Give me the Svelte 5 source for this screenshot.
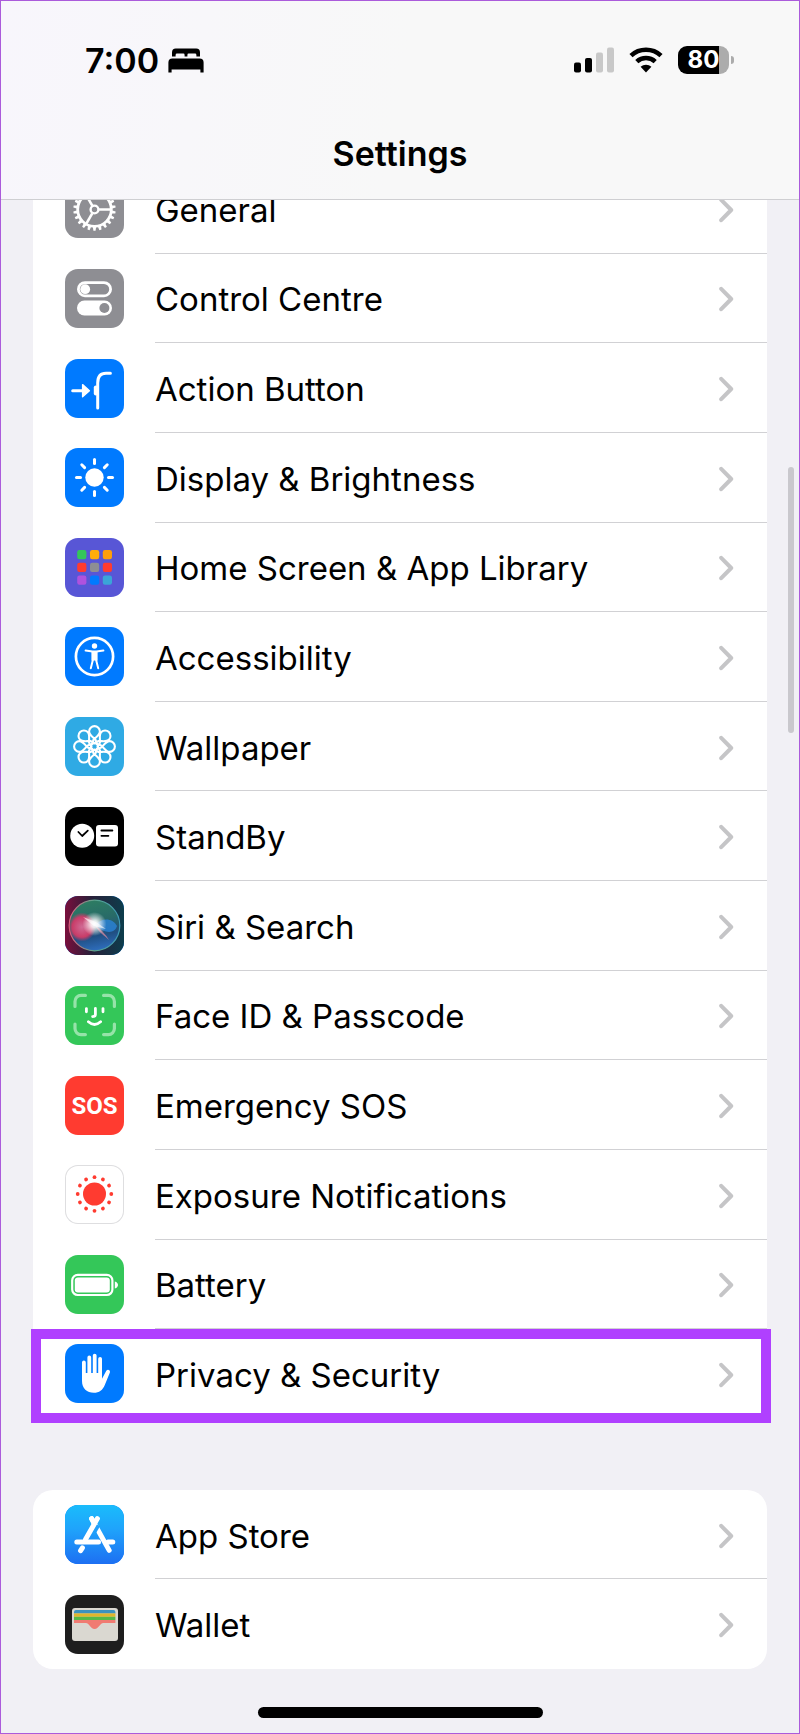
<script lang="ts">
  interface Item {
    id: string;
    label: string;
    highlighted?: boolean;
  }

  const groups: Item[][] = [
    [
      { id: "general", label: "General" },
      { id: "control", label: "Control Centre" },
      { id: "action", label: "Action Button" },
      { id: "display", label: "Display & Brightness" },
      { id: "home", label: "Home Screen & App Library" },
      { id: "accessibility", label: "Accessibility" },
      { id: "wallpaper", label: "Wallpaper" },
      { id: "standby", label: "StandBy" },
      { id: "siri", label: "Siri & Search" },
      { id: "faceid", label: "Face ID & Passcode" },
      { id: "sos", label: "Emergency SOS" },
      { id: "exposure", label: "Exposure Notifications" },
      { id: "battery", label: "Battery" },
      { id: "privacy", label: "Privacy & Security", highlighted: true },
    ],
    [
      { id: "appstore", label: "App Store" },
      { id: "wallet", label: "Wallet" },
    ],
  ];

  const homeTiles = [
    "#34c759", "#ffad0a", "#ff9f0a",
    "#ff3b30", "#8e8e93", "#ff3b30",
    "#af52de", "#007aff", "#3aa5d8",
  ];

  // evenly spaced angles around a circle
  const angles = (n: number) => Array.from({ length: n }, (_, i) => (i * 360) / n);
</script>

{#snippet icon(id: string)}
  <svg class="icon icon-{id}" viewBox="0 0 59 59" aria-hidden="true">
    {#if id === "general"}
      <g transform="translate(29.5 30.5)" fill="none" stroke="#fff">
        <circle r="16.8" stroke-width="2.8" />
        <circle r="3.9" stroke-width="2.4" />
        {#each angles(22) as a}
          <path d="M-1.7 -17 L-1.1 -21.2 H1.1 L1.7 -17 Z" fill="#fff" stroke="none" transform="rotate({a})" />
        {/each}
        {#each angles(3) as a}
          <path d="M4.5 0 H16" stroke-width="2.6" transform="rotate({a})" />
        {/each}
      </g>
    {:else if id === "control"}
      <rect x="13.4" y="13.6" width="32.2" height="13.2" rx="6.6" fill="none" stroke="#fff" stroke-width="2.8" />
      <circle cx="20.2" cy="20.2" r="4.9" fill="#fff" />
      <rect x="12" y="31.6" width="35" height="14.8" rx="7.4" fill="#fff" />
      <circle cx="39.4" cy="39" r="5" fill="#8e8e93" />
    {:else if id === "action"}
      <g fill="none" stroke="#fff" stroke-width="3" stroke-linecap="round">
        <path d="M7.7 31.7 H18" />
        <path d="M32.7 49 V24 C32.7 17.5 35 14.3 41 14.3 H45.4" />
      </g>
      <path d="M17.6 25.6 L24.4 31.7 L17.6 37.8 Z" fill="#fff" stroke="#fff" stroke-width="1.4" stroke-linejoin="round" />
      <rect x="28.8" y="26.6" width="4" height="10" rx="2" fill="#fff" />
    {:else if id === "display"}
      <g transform="translate(29.5 29.5)">
        <circle r="9.2" fill="#fff" />
        {#each angles(8) as a}
          <path d="M0 -14 V-18" stroke="#fff" stroke-width="3" stroke-linecap="round" transform="rotate({a})" />
        {/each}
      </g>
    {:else if id === "home"}
      {#each homeTiles as color, i}
        <rect
          x={12.2 + (i % 3) * 12.8}
          y={12 + Math.floor(i / 3) * 12.8}
          width="9.2"
          height="9.2"
          rx="2.2"
          fill={color}
        />
      {/each}
    {:else if id === "accessibility"}
      <circle cx="29.5" cy="29.5" r="18.6" fill="none" stroke="#fff" stroke-width="2.7" />
      <circle cx="29.5" cy="19" r="2.7" fill="#fff" />
      <path
        d="M20.6 23.6 L27.5 24.6 H31.5 L38.4 23.6 M25.8 41.2 L28 32.5 L29.5 31 L31 32.5 L33.2 41.2"
        fill="none"
        stroke="#fff"
        stroke-width="2"
        stroke-linecap="round"
        stroke-linejoin="round"
      />
      <path d="M26.4 24 H32.6 V33.5 H26.4 Z" fill="#fff" />
    {:else if id === "wallpaper"}
      <g transform="translate(29.5 29.5)" fill="none" stroke="#fff" stroke-width="2.1" stroke-linejoin="round">
        {#each angles(8) as a}
          <path d="M-2.4 -1.6 L-1.2 -6.4 C0.6 -9 5.4 -11.2 5.4 -15 A5.4 5.4 0 0 0 -5.4 -15 C-5.4 -11.2 -0.6 -9 1.2 -6.4 L2.4 -1.6" transform="rotate({a})" />
        {/each}
        <circle r="3.6" />
      </g>
    {:else if id === "standby"}
      <circle cx="17.2" cy="28.8" r="12" fill="#fff" />
      <rect x="31" y="18" width="22" height="21.4" rx="3" fill="#fff" />
      <path
        d="M13.4 25 L17.2 29 L22.8 23.6 M36.4 23.5 H47.4 M36.4 28.8 H43.4"
        fill="none"
        stroke="#000"
        stroke-width="1.8"
        stroke-linecap="round"
        stroke-linejoin="round"
      />
    {:else if id === "siri"}
      <defs>
        <linearGradient id="siri-bg">
          <stop offset="0" stop-color="#7a0f3c" />
          <stop offset="0.45" stop-color="#28203a" />
          <stop offset="1" stop-color="#0d3d4c" />
        </linearGradient>
        <linearGradient id="siri-orb" x1="0.4" y1="0" x2="0.6" y2="1">
          <stop offset="0" stop-color="#2d7d62" />
          <stop offset="0.4" stop-color="#286a68" />
          <stop offset="0.7" stop-color="#204f82" />
          <stop offset="1" stop-color="#2f6fc0" />
        </linearGradient>
        <linearGradient id="siri-rim">
          <stop offset="0" stop-color="#e0607f" />
          <stop offset="0.5" stop-color="#5aa58c" />
          <stop offset="1" stop-color="#3d9ab8" />
        </linearGradient>
        <radialGradient id="siri-glow">
          <stop offset="0" stop-color="#fff" />
          <stop offset="0.3" stop-color="#fff" stop-opacity="0.85" />
          <stop offset="1" stop-color="#fff" stop-opacity="0" />
        </radialGradient>
        <radialGradient id="siri-red">
          <stop offset="0" stop-color="#cf6a94" />
          <stop offset="0.7" stop-color="#c83c68" />
          <stop offset="1" stop-color="#c83c68" stop-opacity="0" />
        </radialGradient>
      </defs>
      <rect width="59" height="59" fill="url(#siri-bg)" />
      <circle cx="29.5" cy="29.5" r="25.3" fill="url(#siri-orb)" stroke="url(#siri-rim)" stroke-width="1.2" />
      <ellipse cx="17" cy="31" rx="14" ry="14.5" fill="url(#siri-red)" />
      <path d="M30 29 C36 22 47 21 52 30 C50 37 41 39 30 29 Z" fill="#2b83d8" fill-opacity="0.8" />
      <path d="M30 29 C36 33 41 39 44 44 C39 39 33 36 30 29 Z" fill="#e08aa0" fill-opacity="0.7" />
      <circle cx="29.5" cy="28" r="12" fill="url(#siri-glow)" />
      <path d="M18 21 L31 26 L41 33 L29 30 Z" fill="#fff" fill-opacity="0.6" />
    {:else if id === "faceid"}
      <path
        d="M10 20.4 V15.4 A6 6 0 0 1 16 9.4 H20.4 M38.6 9.4 H43.4 A6 6 0 0 1 49.4 15.4 V20.4 M49.4 38 V42.6 A6 6 0 0 1 43.4 48.6 H38.6 M20.4 48.6 H16 A6 6 0 0 1 10 42.6 V38"
        fill="none"
        stroke="#96e3a9"
        stroke-width="3.2"
        stroke-linecap="round"
      />
      <path
        d="M21.4 22.6 V25.8 M38 22.6 V25.8 M30.4 22.4 V28.4 Q30.4 30.6 27.6 30.6 M23.4 35.8 Q29.5 41.2 35.6 35.8"
        fill="none"
        stroke="#fff"
        stroke-width="2.8"
        stroke-linecap="round"
      />
    {:else if id === "sos"}
      <text x="29.5" y="38" text-anchor="middle">SOS</text>
    {:else if id === "exposure"}
      <g transform="translate(29.5 29)" fill="#ff3b30">
        <circle r="11.5" />
        {#each angles(12) as a}
          <circle cy="-16.8" r="1.9" transform="rotate({a})" />
        {/each}
      </g>
    {:else if id === "battery"}
      <rect x="7.2" y="19.8" width="40.2" height="20.2" rx="5.6" fill="none" stroke="#fff" stroke-width="2.2" />
      <rect x="9.8" y="22.4" width="35" height="15" rx="3.2" fill="#fff" />
      <path d="M49.8 26.4 C52 27 53 28.4 53 29.9 C53 31.4 52 32.8 49.8 33.4 Z" fill="#fff" />
    {:else if id === "privacy"}
      <path
        d="M18.9 18.4 V32 M24.3 13.4 V30 M29.7 11.6 V30 M35.1 14.8 V32"
        stroke="#fff"
        stroke-width="3.8"
        stroke-linecap="round"
      />
      <path
        d="M17 29 V37 C17 44.5 22 48.8 28.8 48.8 C34.2 48.8 37.8 46 39.8 41 L44.9 28.4 C45.6 26.2 42.6 24.6 41.3 26.8 L37 34.8 V29 Z"
        fill="#fff"
      />
    {:else if id === "appstore"}
      <defs>
        <linearGradient id="store-bg" x2="0" y2="1">
          <stop offset="0" stop-color="#1abcfb" />
          <stop offset="0.4" stop-color="#1fa4fb" />
          <stop offset="1" stop-color="#1d6ff2" />
        </linearGradient>
      </defs>
      <rect width="59" height="59" fill="url(#store-bg)" />
      <g fill="none" stroke="#fff" stroke-width="5" stroke-linecap="round">
        <path d="M11.8 37 H33.5 M43 37 H47.8 M17.4 42.8 L15.6 45.6" />
        <path d="M26.6 13.6 L44.2 45.4" />
        <path d="M31.8 19.4 L26.6 28.4" stroke="#209ffa" stroke-width="7.4" stroke-linecap="butt" />
        <path d="M32.4 13.6 L20.6 34.2" />
        <path d="M26.6 13.6 L29 18" />
      </g>
    {:else if id === "wallet"}
      <rect x="7" y="13" width="46" height="33" rx="3" fill="#dad8d1" />
      <path d="M9 18.4 V17 Q9 15 11 15 H48.4 Q50.4 15 50.4 17 V18.4 Z" fill="#3a92bf" />
      <rect x="9" y="18.4" width="41.4" height="3.4" fill="#dfb52c" />
      <rect x="9" y="21.8" width="41.4" height="3.2" fill="#55b848" />
      <path d="M9 25 H50.4 V28 H38.4 C34.6 28 34 34 29.6 34 C25.2 34 24.6 28 20.8 28 H9 Z" fill="#f07b72" />
    {/if}
  </svg>
{/snippet}

<div class="screen">
  <header>
    <div class="status-bar">
      <span class="time">7:00</span>
      <svg class="bed" width="36" height="25" viewBox="0 0 36 25" aria-hidden="true">
        <path d="M4 8.6 V4.4 Q4 0.6 7.8 0.6 H28.2 Q32 0.6 32 4.4 V8.6 H28.4 V7 Q28.4 5.6 27 5.6 H20.6 Q19.4 5.6 19.4 7 V8.6 H16.6 V7 Q16.6 5.6 15.4 5.6 H9 Q7.6 5.6 7.6 7 V8.6 Z" />
        <path d="M0.4 24.4 V14.4 Q0.4 10.4 4.4 10.4 H31.6 Q35.6 10.4 35.6 14.4 V24.4 H32.4 V21.6 H3.6 V24.4 Z" />
      </svg>
      <div class="indicators">
        <svg width="40" height="26" viewBox="0 0 40 26" aria-hidden="true">
          <rect x="0" y="15.6" width="7" height="10" rx="2" />
          <rect x="11" y="11" width="7" height="14.6" rx="2" />
          <rect x="22" y="5.4" width="7" height="20.2" rx="2" fill="#c8c8c8" />
          <rect x="33" y="0.4" width="7" height="25.2" rx="2" fill="#c8c8c8" />
        </svg>
        <svg width="34" height="26" viewBox="0 0 34 26" aria-hidden="true">
          <path d="M2 8.6 C10.4 0.8 23.6 0.8 32 8.6" fill="none" stroke="#000" stroke-width="4.6" />
          <path d="M7.8 14.6 C13 9.8 21 9.8 26.2 14.6" fill="none" stroke="#000" stroke-width="4.6" />
          <path d="M17 25.4 L11.6 19.8 C14.6 17 19.4 17 22.4 19.8 Z" />
        </svg>
        <div class="battery">
          <span class="level">80</span>
          <span class="nub"></span>
        </div>
      </div>
    </div>
    <h1>Settings</h1>
  </header>

  <main>
    {#each groups as group}
      <ul style="flex-grow: {group.length}">
        {#each group as item (item.id)}
          <li class:highlighted={item.highlighted}>
            <a href="#{item.id}">
              {@render icon(item.id)}
              <span class="row-body">
                <span class="label">{item.label}</span>
                <svg class="chevron" width="16" height="26" viewBox="0 0 16 26" aria-hidden="true">
                  <path d="M3.2 2.8 L13.2 13 L3.2 23.2" />
                </svg>
              </span>
            </a>
          </li>
        {/each}
      </ul>
    {/each}
  </main>

  <div class="scrollbar"></div>
  <div class="home-indicator"></div>
</div>

<style>
  :global(body) {
    margin: 0;
    background: #f1f0f5;
  }

  .screen {
    position: relative;
    display: flex;
    flex-direction: column;
    box-sizing: border-box;
    min-height: 100vh;
    border: 1px solid #ab5bdb;
    background: #f1f0f5;
    color: #000;
    font-family: Inter, "Liberation Sans", sans-serif;
    font-size: 33px;
  }

  header {
    position: sticky;
    top: 0;
    z-index: 1;
    padding-bottom: 10px;
    border-bottom: 1px solid #cfcfd2;
    background: linear-gradient(100deg, #f8f6fc, #f8f8f8 50%);
  }

  .status-bar {
    display: flex;
    align-items: center;
    height: 118px;
    padding: 0 65px 0 84px;
  }

  .time {
    font-size: 34px;
    font-weight: 600;
  }

  .bed {
    margin-left: 9px;
  }

  .indicators {
    display: flex;
    align-items: center;
    gap: 15px;
    margin-left: auto;
  }

  .battery {
    display: flex;
    align-items: center;
    gap: 2px;
  }

  .level {
    width: 51px;
    border-radius: 9px;
    background: linear-gradient(90deg, #000 80%, #acacac 80%);
    color: #fff;
    font-size: 24px;
    font-weight: 700;
    line-height: 28px;
    text-align: center;
  }

  .nub {
    width: 3px;
    height: 8px;
    border-radius: 0 4px 4px 0;
    background: #acacac;
  }

  h1 {
    margin: 0;
    font-size: 34px;
    font-weight: 600;
    line-height: 70px;
    text-align: center;
  }

  /* the first row is scrolled partly under the header */
  main {
    flex: 1;
    display: flex;
    flex-direction: column;
    gap: 71px;
    margin: -36px 32px 38px;
  }

  ul {
    display: flex;
    flex-direction: column;
    margin: 0;
    padding: 0;
    border-radius: 20px;
    background: #fff;
    list-style: none;
  }

  li {
    position: relative;
    flex: 1;
    display: flex;
    min-height: 76px;
  }

  a {
    flex: 1;
    display: flex;
    align-items: center;
    gap: 31px;
    padding-left: 32px;
    color: inherit;
    text-decoration: none;
  }

  .row-body {
    flex: 1;
    display: flex;
    align-items: center;
    justify-content: space-between;
    align-self: stretch;
    padding: 3px 33px 0 0;
    border-bottom: 1px solid #d1d1d4;
  }

  li:last-child .row-body {
    border-bottom-color: transparent;
  }

  .highlighted::after {
    content: "";
    position: absolute;
    inset: 0 -4px -4px -2px;
    border: 10px solid #b040ff;
    pointer-events: none;
  }

  .chevron path {
    fill: none;
    stroke: #c5c5c7;
    stroke-width: 4;
    stroke-linecap: round;
    stroke-linejoin: round;
  }

  .icon {
    flex: none;
    width: 59px;
    height: 59px;
    border-radius: 13px;
    background: #007aff;
  }

  .icon-general,
  .icon-control {
    background: #8e8e93;
  }

  .icon-home {
    background: #5856d6;
  }

  .icon-wallpaper {
    background: #2faae4;
  }

  .icon-standby {
    background: #000;
  }

  .icon-faceid,
  .icon-battery {
    background: #34c759;
  }

  .icon-sos {
    background: #ff3b30;
  }

  .icon-sos text {
    fill: #fff;
    font-family: Roboto, "Liberation Sans", sans-serif;
    font-size: 24px;
    font-weight: 700;
  }

  .icon-exposure {
    background: #fff;
    box-shadow: inset 0 0 0 1px #dedee0;
  }

  .icon-wallet {
    background: #1e1e1e;
  }

  .scrollbar {
    position: absolute;
    top: 466px;
    right: 5px;
    width: 6px;
    height: 266px;
    border-radius: 3px;
    background: #c9c8cd;
  }

  .home-indicator {
    width: 285px;
    height: 11px;
    margin: 0 auto 15px;
    border-radius: 6px;
    background: #000;
  }
</style>
